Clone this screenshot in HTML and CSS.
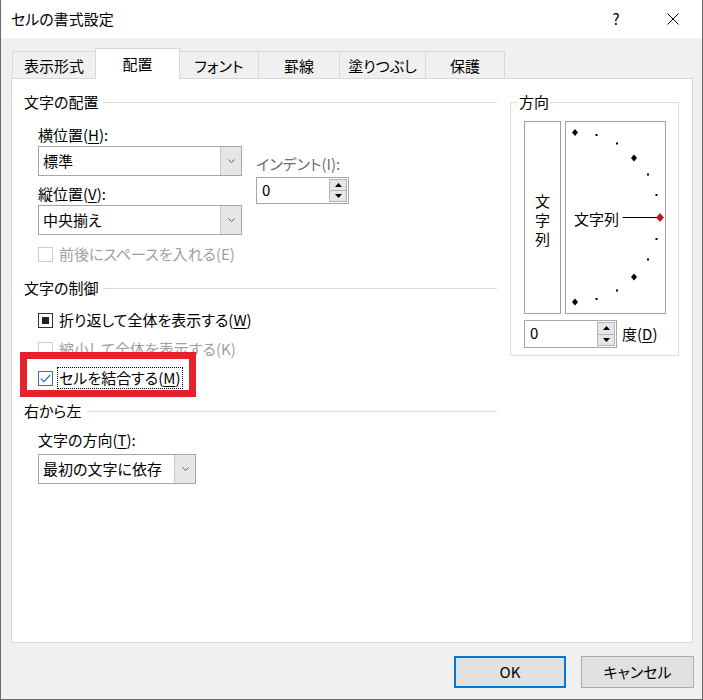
FILE: index.html
```html
<!DOCTYPE html>
<html lang="ja">
<head>
<meta charset="utf-8">
<title>セルの書式設定</title>
<link rel="stylesheet" href="styles.css">
</head>
<body>
<div class="window">
  <div class="titlebar">
    <span class="title">セルの書式設定</span>
    <span class="help">?</span>
    <span class="close"><svg width="12" height="12" viewBox="0 0 12 12"><path d="M0.5 0.5L11.5 11.5M11.5 0.5L0.5 11.5" stroke="#000" stroke-width="1" fill="none"/></svg></span>
  </div>
  <div class="main">
    <div class="tabs">
      <div class="tab t1">表示形式</div>
      <div class="tab t2 sel">配置</div>
      <div class="tab t3">フォント</div>
      <div class="tab t4">罫線</div>
      <div class="tab t5">塗りつぶし</div>
      <div class="tab t6">保護</div>
    </div>
    <div class="panel">
      <div class="col-left">
        <div class="grp"><span>文字の配置</span><i class="rule"></i></div>
        <div class="align-block">
          <div class="align-main">
            <div class="lbl">横位置(<u>H</u>):</div>
            <div class="combo w204"><span class="val">標準</span><span class="drop"><svg width="7" height="4" viewBox="0 0 7 4"><path d="M0.5 0.5L3.5 3.5L6.5 0.5" stroke="#5a5a5a" fill="none"/></svg></span></div>
            <div class="lbl mt7">縦位置(<u>V</u>):</div>
            <div class="combo w204"><span class="val">中央揃え</span><span class="drop"><svg width="7" height="4" viewBox="0 0 7 4"><path d="M0.5 0.5L3.5 3.5L6.5 0.5" stroke="#5a5a5a" fill="none"/></svg></span></div>
          </div>
          <div class="indent">
            <div class="lbl dim">インデント(I):</div>
            <div class="spin w93i"><span class="val">0</span><span class="btns"><span><svg width="7" height="4" viewBox="0 0 7 4"><path d="M0 4L3.5 0L7 4Z" fill="#000"/></svg></span><span><svg width="7" height="4" viewBox="0 0 7 4"><path d="M0 0L3.5 4L7 0Z" fill="#000"/></svg></span></span></div>
          </div>
        </div>
        <div class="chk disabled r1"><span class="box"></span><span>前後にスペースを入れる(E)</span></div>

        <div class="grp g2"><span>文字の制御</span><i class="rule"></i></div>
        <div class="chk r2"><span class="box"><i class="ind"></i></span><span>折り返して全体を表示する(<u>W</u>)</span></div>
        <div class="chk disabled r3"><span class="box"></span><span>縮小して全体を表示する(K)</span></div>
        <div class="chk r4 merge">
          <span class="box checked"><svg width="11" height="9" viewBox="0 0 11 9"><path d="M0.8 4.6L3.8 7.6L10.2 1" stroke="#2a72c8" stroke-width="1.3" fill="none"/></svg></span>
          <span class="focus">セルを結合する(<u>M</u>)</span>
          <span class="mark"></span>
        </div>

        <div class="grp g3"><span>右から左</span><i class="rule"></i></div>
        <div class="lbl ind14 l3">文字の方向(<u>T</u>):</div>
        <div class="combo w158 ind14 c3"><span class="val">最初の文字に依存</span><span class="drop"><svg width="7" height="4" viewBox="0 0 7 4"><path d="M0.5 0.5L3.5 3.5L6.5 0.5" stroke="#5a5a5a" fill="none"/></svg></span></div>
      </div>

      <fieldset class="dir">
        <legend>方向</legend>
        <div class="dir-row">
          <div class="vbox"><span>文<br>字<br>列</span></div>
          <div class="arc">
            <svg width="99" height="191" viewBox="0 0 99 191">
              <g fill="#000">
                <path d="M9 7L12 10.5L9 14L6 10.5Z"/>
                <path d="M68 32.5L71 36L68 39.5L65 36Z"/>
                <path d="M68 151.5L71 155L68 158.5L65 155Z"/>
                <path d="M9 176.5L12 180L9 183.5L6 180Z"/>
                <rect x="29.5" y="12" width="2" height="2"/>
                <rect x="50" y="20.5" width="2" height="2"/>
                <rect x="81" y="51.5" width="2" height="2"/>
                <rect x="89.5" y="72" width="2" height="2"/>
                <rect x="89.5" y="116" width="2" height="2"/>
                <rect x="81" y="136.5" width="2" height="2"/>
                <rect x="50" y="167.5" width="2" height="2"/>
                <rect x="29.5" y="176" width="2" height="2"/>
              </g>
              <path d="M56.5 95.5H91" stroke="#000" stroke-width="1"/>
              <path d="M94 91.5L97.5 95.5L94 99.5L90.5 95.5Z" fill="#d0101c" stroke="#7a0000" stroke-width="0.6"/>
              <text x="8" y="103" class="arctext">文字列</text>
            </svg>
          </div>
        </div>
        <div class="deg-row">
          <div class="spin w93d"><span class="val">0</span><span class="btns"><span><svg width="7" height="4" viewBox="0 0 7 4"><path d="M0 4L3.5 0L7 4Z" fill="#000"/></svg></span><span><svg width="7" height="4" viewBox="0 0 7 4"><path d="M0 0L3.5 4L7 0Z" fill="#000"/></svg></span></span></div>
          <span>度(<u>D</u>)</span>
        </div>
      </fieldset>
    </div>
    <div class="buttons">
      <div class="btn ok">OK</div>
      <div class="btn cancel">キャンセル</div>
    </div>
  </div>
</div>
</body>
</html>
```

FILE: styles.css
```css
* { box-sizing: border-box; }
body { margin: 0; background: #fff; }

.window {
  width: 703px;
  height: 700px;
  border: 1px solid #6b6b6b;
  border-top: 0;
  background: #f0f0f0;
  font-family: "Noto Sans CJK JP", "Noto Sans", sans-serif;
  font-size: 15px;
  line-height: 22px;
  color: #000;
  font-feature-settings: "palt" 1;
  display: flex;
  flex-direction: column;
  overflow: hidden;
}

u { text-decoration: underline; text-underline-offset: 2px; text-decoration-thickness: 1px; }

/* title bar */
.titlebar {
  height: 38px;
  background: #fff;
  display: flex;
  align-items: center;
  padding-left: 10px;
  flex: none;
}
.title { flex: 1; }
.help { width: 56px; text-align: center; }
.close {
  width: 58px;
  height: 38px;
  display: flex;
  align-items: center;
  justify-content: center;
}

/* main area */
.main {
  flex: 1;
  display: flex;
  flex-direction: column;
  padding: 10px 9px 0 10px;
}

.tabs {
  display: flex;
  align-items: flex-end;
  height: 30px;
  padding-left: 1px;
  flex: none;
}
.tab {
  height: 27px;
  border: 1px solid #d9d9d9;
  border-bottom: 0;
  margin-left: -1px;
  text-align: center;
  line-height: 27px;
  background: #f0f0f0;
}
.tab.t1 { margin-left: 0; width: 84px; }
.tab.t2 { width: 85px; }
.tab.t3 { width: 80px; }
.tab.t4 { width: 82px; }
.tab.t5 { width: 87px; }
.tab.t6 { width: 80px; }
.tab.sel {
  height: 31px;
  margin-bottom: -1px;
  background: #fff;
  position: relative;
  z-index: 1;
  line-height: 30px;
}

.panel {
  height: 565px;
  flex: none;
  background: #fff;
  border: 1px solid #d9d9d9;
  display: flex;
  align-items: flex-start;
  gap: 13px;
  padding: 12px 12px 0 12px;
}

.col-left {
  width: 473px;
  display: flex;
  flex-direction: column;
}

.grp { display: flex; align-items: center; height: 22px; }
.grp .rule { flex: 1; height: 1px; background: #dcdcdc; margin-left: 5px; }
.grp.g2 { margin-top: 12px; }
.grp.g3 { margin-top: 11px; }

.align-block {
  display: flex;
  gap: 14px;
  margin-top: 11px;
  padding-left: 14px;
}
.align-main { width: 204px; display: flex; flex-direction: column; }
.indent { padding-top: 29px; width: 93px; display: flex; flex-direction: column; }
.indent .spin { margin-top: 2px; }

.lbl { height: 22px; line-height: 22px; white-space: nowrap; }
.lbl.mt7 { margin-top: 7px; }
.lbl.dim { color: #6d6d6d; }
.ind14 { margin-left: 14px; }
.lbl.l3 { margin-top: 7px; }

/* combo box */
.combo {
  display: flex;
  height: 30px;
  border: 1px solid #a6a6a6;
  background: #fff;
}
.combo.w204 { width: 204px; }
.combo.w158 { width: 158px; }
.combo.c3 { margin-top: 3px; }
.combo .val { flex: 1; padding-left: 4px; line-height: 28px; white-space: nowrap; }
.combo .drop {
  width: 21px;
  background: #e6e6e6;
  border-left: 1px solid #c9c9c9;
  display: flex;
  align-items: center;
  justify-content: center;
}

/* spinner */
.spin {
  display: flex;
  border: 1px solid #a6a6a6;
  background: #fff;
  padding: 1px;
}
.spin.w93i { width: 93px; height: 27px; }
.spin.w93d { width: 93px; height: 28px; }
.spin .val { flex: 1; padding-left: 4px; line-height: 22px; }
.spin .btns { width: 18px; display: flex; flex-direction: column; }
.spin .btns span {
  flex: 1;
  background: #e6e6e6;
  border: 1px solid #b4b4b4;
  display: flex;
  align-items: center;
  justify-content: center;
}
.spin .btns span + span { border-top: 0; }

/* checkboxes */
.chk {
  display: flex;
  align-items: center;
  height: 22px;
  margin-left: 14px;
  white-space: nowrap;
}
.chk.r1 { margin-top: 8px; }
.chk.r2 { margin-top: 10px; }
.chk.r3 { margin-top: 7px; }
.chk.r4 { margin-top: 7px; }
.box {
  width: 15px;
  height: 15px;
  border: 1px solid #333;
  background: #fff;
  margin-right: 6px;
  display: flex;
  align-items: center;
  justify-content: center;
  flex: none;
}
.box .ind { width: 7px; height: 7px; background: #222; display: block; }
.box.checked { border-color: #2a72c8; }
.chk.disabled { color: #a0a0a0; }
.chk.disabled .box { border-color: #cccccc; }
.focus {
  border: 1px dotted #000;
  padding: 0 1px;
  line-height: 20px;
  margin-left: -2px;
}
.merge { position: relative; }
.merge .mark {
  position: absolute;
  left: -18px;
  top: -15px;
  width: 176px;
  height: 45px;
  border: 7px solid #e8202a;
}

/* direction group */
.dir {
  margin: 0;
  width: 169px;
  min-width: 0;
  border: 1px solid #dcdcdc;
  padding: 8px 12px 7px 13px;
}
.dir legend {
  padding: 0 1px;
  margin-left: -6px;
  line-height: 22px;
}
.dir-row { display: flex; gap: 4px; }
.vbox {
  width: 37px;
  height: 193px;
  border: 1px solid #a0a0a0;
  display: flex;
  align-items: center;
  justify-content: center;
  text-align: center;
  line-height: 19px;
  padding-top: 4px;
}
.arc {
  width: 101px;
  height: 193px;
  border: 1px solid #a0a0a0;
}
.arc svg { display: block; }
.arctext { font-size: 15px; fill: #000; }
.deg-row { display: flex; align-items: center; gap: 5px; margin-top: 6px; }

/* buttons */
.buttons {
  display: flex;
  justify-content: flex-end;
  gap: 15px;
  margin-top: 13px;
  margin-right: -1px;
}
.btn {
  height: 32px;
  background: #e1e1e1;
  border: 1px solid #adadad;
  display: flex;
  align-items: center;
  justify-content: center;
}
.btn.ok { width: 112px; border: 2px solid #0078d7; }
.btn.cancel { width: 113px; }
```
